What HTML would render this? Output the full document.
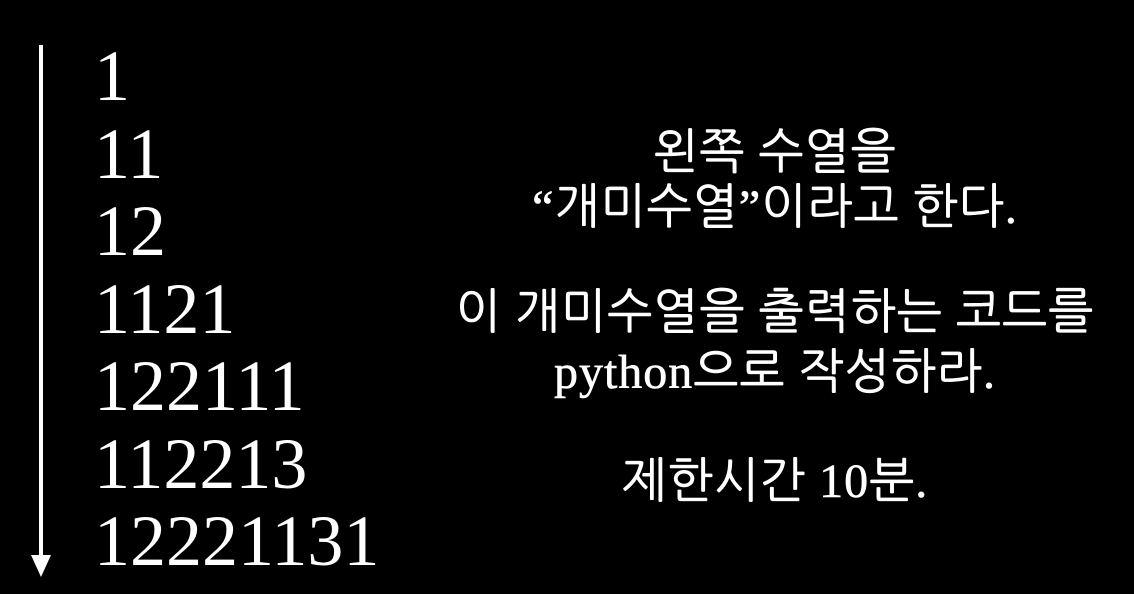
<!DOCTYPE html>
<html><head><meta charset="utf-8"><style>
html,body{margin:0;padding:0;background:#000;width:1134px;height:594px;overflow:hidden}
.nums{position:absolute;left:94px;top:38px;font-family:"Liberation Serif",serif;font-size:72px;line-height:77.5px;color:#fff}
.txt{position:absolute;left:420px;width:710px;text-align:center;color:#fff;font-family:"Liberation Serif","NanumGothic","Noto Sans CJK KR",sans-serif;font-size:48px;line-height:50px;white-space:nowrap;letter-spacing:1px;-webkit-text-stroke:0.6px #fff}
</style></head><body>
<svg style="position:absolute;left:0;top:0" width="100" height="594">
<line x1="41" y1="45" x2="41" y2="565" stroke="#fff" stroke-width="4"/>
<polygon points="31,555 51,555 41,577" fill="#fff"/>
</svg>
<div class="nums">1<br>11<br>12<br>1121<br>122111<br>112213<br>12221131</div>
<div class="txt" style="top:128px">왼쪽 수열을</div>
<div class="txt" style="top:183px">“개미수열”이라고 한다.</div>
<div class="txt" style="top:288px">이 개미수열을 출력하는 코드를</div>
<div class="txt" style="top:348px">python으로 작성하라.</div>
<div class="txt" style="top:457px">제한시간 10분.</div>
</body></html>
